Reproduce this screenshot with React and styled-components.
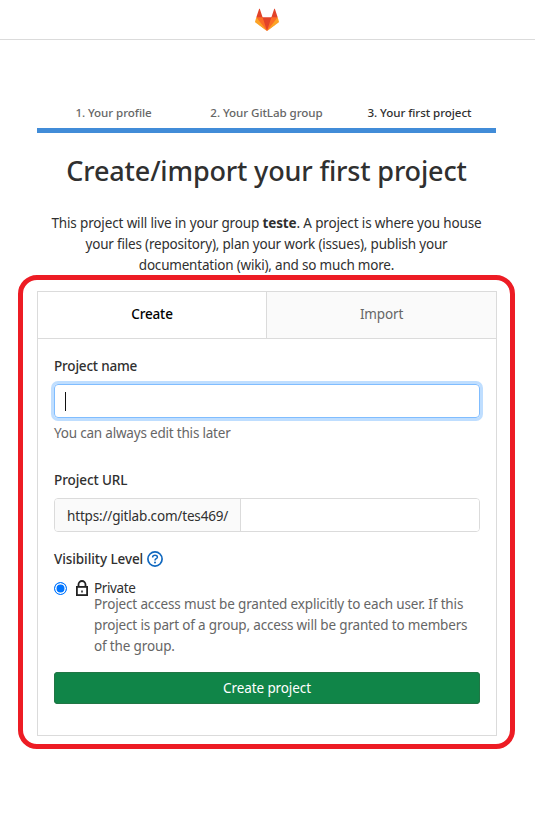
import React from 'react';
import styled, { createGlobalStyle } from 'styled-components';

const GlobalStyle = createGlobalStyle`
  *, *::before, *::after { box-sizing: border-box; }
  body {
    margin: 0;
    background: #fff;
    color: #303030;
    font: 400 13.5px/21px "Noto Sans", sans-serif;
    letter-spacing: -0.12px;
  }
`;

const Page = styled.div`
  width: 535px;
  height: 819px;
  overflow: hidden;
`;

const Header = styled.header`
  height: 40px;
  display: flex;
  justify-content: center;
  align-items: flex-start;
  padding: 8px 2px 0 0;
  border-bottom: 1px solid #dbdbdb;
`;

const Steps = styled.ol`
  list-style: none;
  display: grid;
  grid-template-columns: repeat(3, 1fr);
  margin: 63px 39px 0 37px;
  padding: 0;
  height: 30px;
  border-bottom: 5px solid #418cd8;
`;

const Step = styled.li`
  font-size: 11.6px;
  line-height: 20px;
  font-weight: 500;
  letter-spacing: -0.07px;
  text-align: center;
  white-space: nowrap;
  color: ${(p) => (p.$current ? '#303030' : '#666')};
`;

const Title = styled.h1`
  margin: 20px 2px 0 0;
  font-size: 27px;
  line-height: 36px;
  font-weight: 500;
  letter-spacing: -0.16px;
  text-align: center;
`;

const Intro = styled.p`
  margin: 24px 2px 0 0;
  height: 62px;
  text-align: center;
  white-space: nowrap;
`;

const Line = styled.span`
  display: block;
  letter-spacing: ${(p) => p.$spacing}px;
`;

const Highlight = styled.div`
  width: 497px;
  height: 474px;
  margin-left: 18px;
  padding: 11px 13px 8px 14px;
  border: 5px solid #ed1c24;
  border-radius: 19px;
`;

const Card = styled.section`
  height: 445px;
  border: 1px solid #dbdbdb;
`;

const Tabs = styled.div`
  display: grid;
  grid-template-columns: 228px 1fr;
  height: 47px;
  border-bottom: 1px solid #dbdbdb;
`;

const Tab = styled.button`
  padding: 0 0 1px;
  border: 0;
  border-left: ${(p) => (p.$active ? '0' : '1px solid #dbdbdb')};
  background: ${(p) => (p.$active ? '#fff' : '#fafafa')};
  color: ${(p) => (p.$active ? '#000' : '#666')};
  font: inherit;
  font-weight: ${(p) => (p.$active ? 500 : 400)};
  letter-spacing: -0.15px;
`;

const Form = styled.form`
  padding: 17px 16px 0;
`;

const Label = styled.label`
  display: flex;
  align-items: center;
  gap: 4px;
  height: 21px;
  font-weight: 500;
  letter-spacing: ${(p) => p.$spacing || -0.08}px;
`;

const FocusedField = styled.div`
  height: 34px;
  margin-top: 7px;
  padding: 7px 10px;
  border: 1px solid #80bdff;
  border-radius: 4px;
  box-shadow: 0 0 0 3px #bfdeff;
`;

const Caret = styled.span`
  display: block;
  width: 1px;
  height: 19px;
  background: #111;
`;

const Help = styled.p`
  margin: 5px 0 0;
  color: #666;
  letter-spacing: -0.2px;
`;

const UrlLabel = styled(Label)`
  margin-top: 26px;
`;

const UrlGroup = styled.div`
  display: flex;
  height: 34px;
  margin-top: 7px;
  border: 1px solid #dbdbdb;
  border-radius: 4px;
  overflow: hidden;
`;

const Prefix = styled.span`
  width: 186px;
  padding: 7px 0 0 12px;
  line-height: 21px;
  background: #fafafa;
  border-right: 1px solid #dbdbdb;
  letter-spacing: -0.17px;
`;

const UrlInput = styled.input`
  flex: 1;
  min-width: 0;
  border: 0;
  background: #fff;
`;

const VisibilityLabel = styled(Label)`
  margin-top: 17px;
`;

const Option = styled.div`
  display: grid;
  grid-template-columns: 20px 20px 1fr;
  margin-top: 8px;
  height: 94px;
  align-items: start;
`;

const Radio = styled.span`
  width: 13px;
  height: 13px;
  margin-top: 4px;
  border: 1px solid #0075ff;
  border-radius: 50%;
  background: #0075ff;
  box-shadow: inset 0 0 0 1.5px #fff;
`;

const HelpIcon = styled.svg`
  margin: -1px 0 0 -0.5px;
`;

const LockIcon = styled.svg`
  margin-top: 2px;
`;

const OptionName = styled.div`
  line-height: 17px;
  padding-top: 2px;
  letter-spacing: -0.4px;
`;

const Description = styled.div`
  margin-top: -3px;
  color: #666;
  white-space: nowrap;
`;

const Submit = styled.button`
  display: block;
  width: 100%;
  height: 32px;
  padding: 0;
  border: 0;
  border-radius: 4px;
  background: #108548;
  box-shadow: inset 0 0 0 1px #217645;
  color: #fff;
  font: inherit;
  letter-spacing: -0.1px;
`;

function Logo() {
  return (
    <svg width="24" height="24" viewBox="0 0 36 36">
      <path fill="#e24329" d="M2 14l9.38 9v-9l-4-12.28c-.205-.632-1.176-.632-1.38 0z" />
      <path fill="#e24329" d="M34 14l-9.38 9v-9l4-12.28c.205-.632 1.176-.632 1.38 0z" />
      <path fill="#e24329" d="M18 34.38L3 14h30z" />
      <path fill="#fc6d26" d="M18 34.38L11.38 14H2l4 11z" />
      <path fill="#fc6d26" d="M18 34.38L24.62 14H34l-4 11z" />
      <path fill="#fca326" d="M2 14L.1 20.16c-.18.565 0 1.2.5 1.56L18 34.38z" />
      <path fill="#fca326" d="M34 14l1.9 6.16c.18.565 0 1.2-.5 1.56L18 34.38z" />
    </svg>
  );
}

function QuestionIcon() {
  return (
    <HelpIcon width="16" height="16" viewBox="0 0 16 16" fill="none" stroke="#1068bf">
      <circle cx="8" cy="8" r="7.1" strokeWidth="1.7" />
      <path d="M5.6 6.4C5.6 4.9 6.600 4.200 8 4.200s2.400.8 2.400 2C10.400 7.700 8 7.700 8 9.400" strokeWidth="1.5" />
      <circle cx="8" cy="11.600" r="1" fill="#1068bf" stroke="none" />
    </HelpIcon>
  );
}

export default function App() {
  return (
    <Page>
      <GlobalStyle />
      <Header><Logo /></Header>
      <main>
        <Steps>
          <Step>1. Your profile</Step>
          <Step>2. Your GitLab group</Step>
          <Step $current>3. Your first project</Step>
        </Steps>
        <Title>Create/import your first project</Title>
        <Intro>
          <Line $spacing={-0.14}>
            This project will live in your group <strong>teste</strong>. A project is where you house
          </Line>
          <Line $spacing={-0.19}>your files (repository), plan your work (issues), publish your</Line>
          <Line $spacing={-0.2}>documentation (wiki), and so much more.</Line>
        </Intro>
        <Highlight>
          <Card>
            <Tabs>
              <Tab $active>Create</Tab>
              <Tab>Import</Tab>
            </Tabs>
            <Form>
              <Label $spacing={-0.18}>Project name</Label>
              <FocusedField><Caret /></FocusedField>
              <Help>You can always edit this later</Help>
              <UrlLabel>Project URL</UrlLabel>
              <UrlGroup>
                <Prefix>https://gitlab.com/tes469/</Prefix>
                <UrlInput aria-label="Project URL" />
              </UrlGroup>
              <VisibilityLabel>Visibility Level<QuestionIcon /></VisibilityLabel>
              <Option>
                <Radio />
                <LockIcon width="16" height="16" viewBox="0 0 16 16" fill="none" stroke="#222">
                  <path d="M4.500 6V4.500a3.500 3.500 0 0 1 7 0V6" strokeWidth="1.8" />
                  <rect x="2.900" y="6.900" width="10.200" height="8.200" strokeWidth="1.800" />
                  <rect x="7.250" y="10.500" width="1.500" height="2" fill="#222" stroke="none" />
                </LockIcon>
                <div>
                  <OptionName>Private</OptionName>
                  <Description>
                    <Line $spacing={-0.15}>Project access must be granted explicitly to each user. If this</Line>
                    <Line $spacing={-0.17}>project is part of a group, access will be granted to members</Line>
                    <Line $spacing={-0.15}>of the group.</Line>
                  </Description>
                </div>
              </Option>
              <Submit type="button">Create project</Submit>
            </Form>
          </Card>
        </Highlight>
      </main>
    </Page>
  );
}
